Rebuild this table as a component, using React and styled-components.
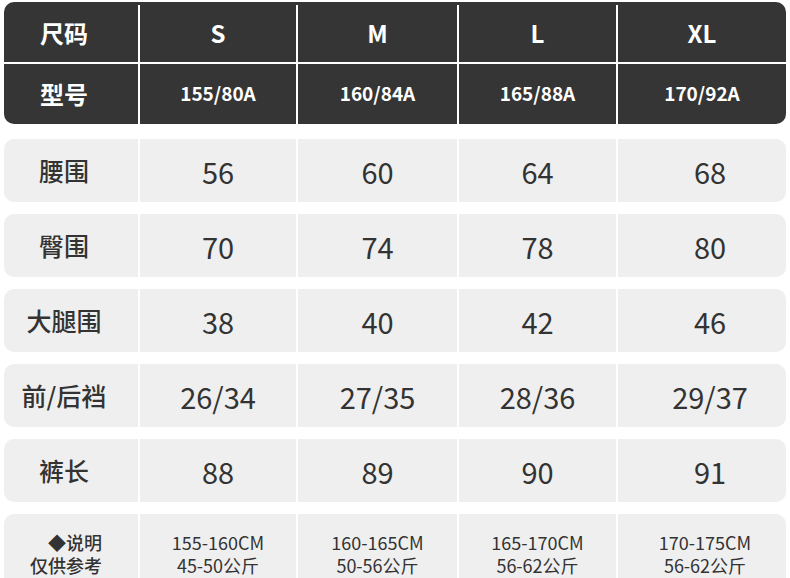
import React from 'react'
import styled, { createGlobalStyle } from 'styled-components'

const Global = createGlobalStyle`
  body {
    margin: 0;
    background: #fff;
    font-family: "Noto Sans CJK SC", "Noto Sans", sans-serif;
  }
`

const cols = '134px 156px 159px 157px 168px'

const Page = styled.div`
  width: 790px;
  height: 578px;
  overflow: hidden;
  padding: 2px 4px 0;
  box-sizing: border-box;
`

const Head = styled.div`
  background: #353535;
  border-radius: 10px;
  overflow: hidden;
  width: 782px;
`

const HeadRow = styled.div`
  display: grid;
  grid-template-columns: ${cols};
  column-gap: 2px;
  height: ${p => (p.$first ? '60px' : '62px')};
  border-top: ${p => (p.$first ? 'none' : '2px solid #fff')};
  box-sizing: border-box;
  padding-top: ${p => (p.$first ? '3px' : '0')};
`

const HeadCell = styled.div`
  display: flex;
  align-items: center;
  justify-content: center;
  color: #fff;
  font-weight: 700;
  font-size: ${p => (p.$big ? '24px' : '19px')};
  padding-right: ${p => (p.$label ? '14px' : '0')};
  padding-bottom: ${p => (p.$big ? '2px' : '4px')};
  box-shadow: ${p => (p.$label ? 'none' : '-2px 0 0 #fff')};
`

const Body = styled.div`
  display: flex;
  flex-direction: column;
  gap: 12px;
  margin-top: 15px;
`

const Row = styled.div`
  display: grid;
  grid-template-columns: ${cols};
  column-gap: 2px;
  height: ${p => (p.$tall ? '80px' : '63px')};
`

const Cell = styled.div`
  background: #efefef;
  display: flex;
  flex-direction: column;
  align-items: center;
  justify-content: center;
  color: #333;
  font-size: ${p => (p.$small ? '18px' : '29px')};
  line-height: ${p => (p.$small ? '23px' : '1')};
  padding-top: ${p => (p.$small ? '0' : '1px')};
  &:first-child {
    border-radius: 10px 0 0 10px;
    font-size: ${p => (p.$small ? '18px' : '25px')};
    font-weight: 500;
    align-items: ${p => (p.$small ? 'flex-end' : 'center')};
    padding-right: ${p => (p.$small ? '36px' : '14px')};
    padding-top: 0;
  }
  &:last-child {
    border-radius: 0 10px 10px 0;
    padding-left: ${p => (p.$small ? '6px' : '16px')};
  }
`

const sizes = ['S', 'M', 'L', 'XL']
const models = ['155/80A', '160/84A', '165/88A', '170/92A']

const rows = [
  ['腰围', '56', '60', '64', '68'],
  ['臀围', '70', '74', '78', '80'],
  ['大腿围', '38', '40', '42', '46'],
  ['前/后裆', '26/34', '27/35', '28/36', '29/37'],
  ['裤长', '88', '89', '90', '91'],
]

const notes = [
  ['155-160CM', '45-50公斤'],
  ['160-165CM', '50-56公斤'],
  ['165-170CM', '56-62公斤'],
  ['170-175CM', '56-62公斤'],
]

export default function App() {
  return (
    <Page>
      <Global />
      <Head>
        <HeadRow $first>
          <HeadCell $label $big>尺码</HeadCell>
          {sizes.map(s => (
            <HeadCell key={s} $big>{s}</HeadCell>
          ))}
        </HeadRow>
        <HeadRow>
          <HeadCell $label $big>型号</HeadCell>
          {models.map(m => (
            <HeadCell key={m}>{m}</HeadCell>
          ))}
        </HeadRow>
      </Head>
      <Body>
        {rows.map(r => (
          <Row key={r[0]}>
            {r.map((v, i) => (
              <Cell key={i}>{v}</Cell>
            ))}
          </Row>
        ))}
        <Row $tall>
          <Cell $small>
            <span>◆说明</span>
            <span>仅供参考</span>
          </Cell>
          {notes.map(n => (
            <Cell key={n[0]} $small>
              <span>{n[0]}</span>
              <span>{n[1]}</span>
            </Cell>
          ))}
        </Row>
      </Body>
    </Page>
  )
}
